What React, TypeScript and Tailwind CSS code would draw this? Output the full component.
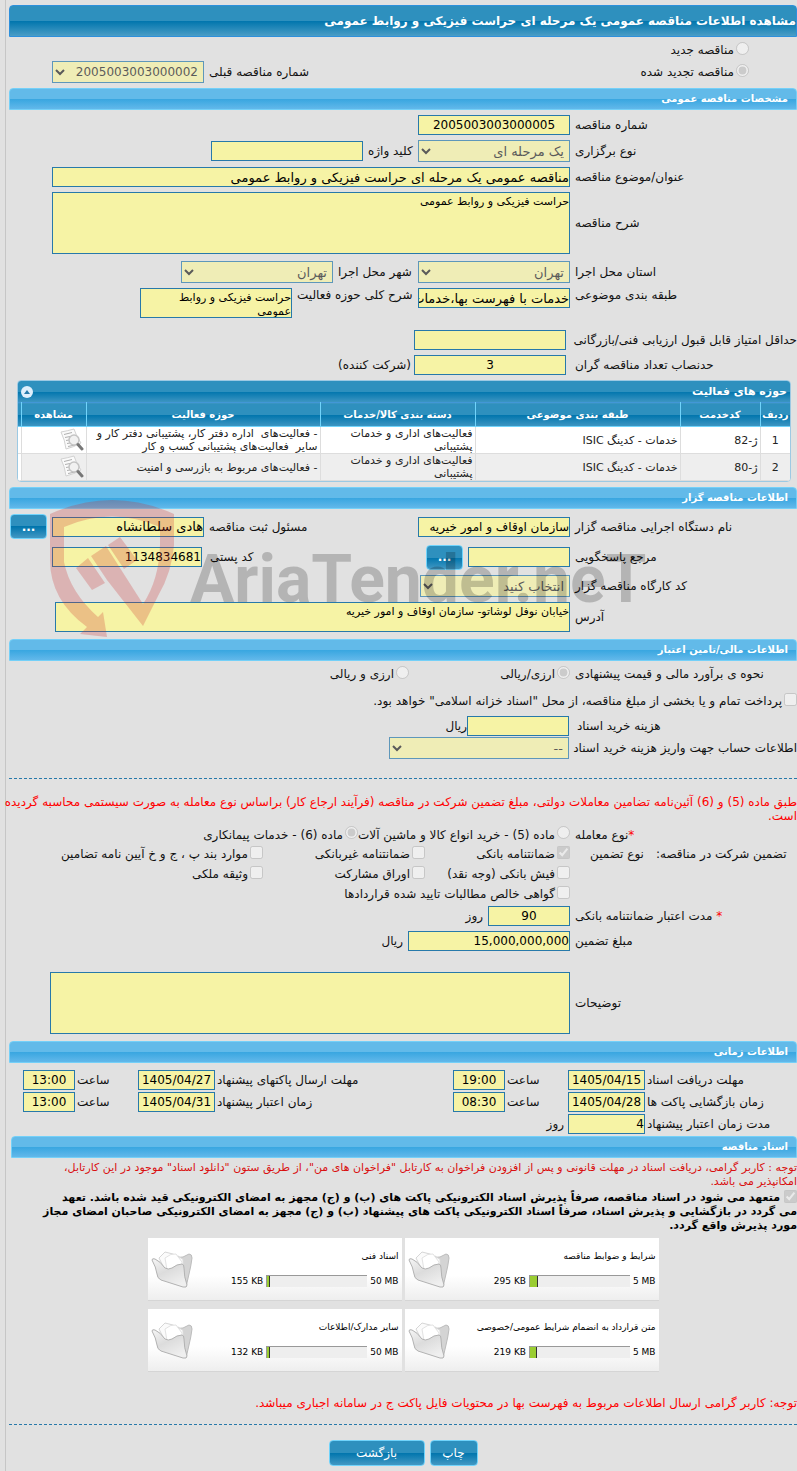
import React from 'react';
import clsx from 'clsx';

const box =
  'border border-[#2779aa] bg-[#f6f3a5] text-black rounded-none outline-none resize-none p-0 leading-[14px]';
const btn =
  'rounded-[4px] border border-[#70d3fb] bg-[linear-gradient(#2e90be_0%,#2e90be_50%,#0075ad_50%,#4298c3_100%)] text-white text-[12px] flex items-center justify-center shrink-0';

interface TextBoxProps {
  id: string;
  value?: string;
  className?: string;
  size?: string;
}

const TextBox: React.FC<TextBoxProps> = ({ id, value = '', className, size = 'text-[12px]' }) => (
  <input id={id} type="text" readOnly defaultValue={value} className={clsx(box, size, 'h-5 shrink-0', className)} />
);

const Area: React.FC<TextBoxProps> = ({ id, value = '', className }) => (
  <textarea id={id} readOnly defaultValue={value} className={clsx(box, 'block overflow-hidden text-[11px] pt-[2px]', className)} />
);

const Select: React.FC<TextBoxProps> = ({ id, value = '', className, size = 'text-[13px]' }) => (
  <select
    id={id}
    disabled
    className={clsx('h-[22px] shrink-0 border border-[#2779aa] bg-[#f6f3a5] text-[#222] opacity-70 ps-px pe-1', size, className)}
  >
    <option>{value}</option>
  </select>
);

// label column, text sits next to the field on its left
const Label: React.FC<{ htmlFor?: string; className?: string; children: React.ReactNode }> = ({ htmlFor, className, children }) => (
  <label htmlFor={htmlFor} className={clsx('shrink-0 text-left whitespace-nowrap', className || 'w-[222px]')}>
    {children}
  </label>
);

interface ChoiceProps {
  type: 'radio' | 'checkbox';
  name: string;
  checked?: boolean;
  className?: string;
  children: React.ReactNode;
}

const Choice: React.FC<ChoiceProps> = ({ type, name, checked, className, children }) => (
  <label className={clsx('flex items-center gap-[2px] whitespace-nowrap shrink-0', className)}>
    <input type={type} name={name} defaultChecked={checked} disabled className="w-[13px] h-[13px] shrink-0 mb-1" />
    {children}
  </label>
);

const SectionBar: React.FC<{ children: React.ReactNode; className?: string }> = ({ children, className }) => (
  <h2
    className={clsx(
      'h-[22px] border border-[#74d0f8] rounded-t-[4px] bg-[linear-gradient(#62bae9_0%,#62bae9_50%,#38a6e0_50%,#62b8ea_100%)] text-white text-[10px] font-bold leading-5 px-2',
      className
    )}
  >
    {children}
  </h2>
);

const Row: React.FC<{ children: React.ReactNode; className?: string }> = ({ children, className }) => (
  <div className={clsx('flex items-center gap-[5px]', className)}>{children}</div>
);

const ViewIcon = () => (
  <svg width="24" height="24" viewBox="0 0 24 24" fill="none">
    <path d="M1 4 Q7 3 14 1 Q16 8 21 15 Q14 19 6 21 Q5 12 1 4 Z" fill="#fafafa" stroke="#d2d2d2" />
    <path d="M4 6.500 L12 4.500 M5 9.500 L10 8.500 M6 12.500 L9 12 M7 15.500 L10 15 M8 18.500 L15 17" stroke="#b0b0b0" />
    <circle cx="14" cy="12" r="5" fill="#efefef" fillOpacity=".85" stroke="#c4c4c4" strokeWidth="1.500" />
    <path d="M18 16.500 L22 21" stroke="#777777" strokeWidth="3" strokeLinecap="round" />
  </svg>
);

const FolderIcon = () => (
  <svg width="42" height="40" viewBox="0 0 42 40" fill="none">
    <defs>
      <linearGradient id="front" x1="0" y1="0" x2="0.6" y2="1">
        <stop offset="0" stopColor="#f6f6f6" />
        <stop offset="0.5" stopColor="#dcdcdc" />
        <stop offset="1" stopColor="#efefef" />
      </linearGradient>
    </defs>
    <path d="M27 6 Q28 8 32 7 L38 4 Q41 4 41 8 Q40 16 38 24 L35 37 L24 20 Z" fill="#d4d4d4" stroke="#bcbcbc" />
    <path d="M8 8 L14 2 L22 4 L32 9 L33 22 L14 20 Z" fill="#fbfbfb" stroke="#d6d6d6" />
    <path d="M14 8 Q20 3 25 4 L31 12 L31 22 L16 20 Z" fill="#ffffff" stroke="#e2e2e2" />
    <path
      d="M1 10 Q1 8 4 9 Q9 11 14 18 Q17 20 21 18 Q26 14 31 14 Q33 14 33 18 Q33 27 36 35 Q36 38 32 37 L10 30 Q6 28 6 24 Q5 17 1 10 Z"
      fill="url(#front)"
      stroke="#b2b2b2"
    />
  </svg>
);

const Watermark = () => (
  <div dir="ltr" aria-hidden="true" className="absolute left-[41px] top-[13px] flex pointer-events-none">
    <svg width="126" height="138" viewBox="0 0 126 138" fill="#cd2d2d" fillOpacity=".25">
      <path d="M0 14 Q62 -14 124 14 L124 45 Q122 72 108 96 L93 126 L57 80 L41 56 L56 46 L93 104 Q109 80 110 45 L110 27 Q62 6 14 27 L14 62 Q20 92 48 117 L53 112 L57 137 L30 134 L37 127 Q0 100 0 60 Z" />
      <path d="M26 68 L38 58 L55 83 L42 90 Z M58 45 L70 37 L87 60 L74 69 Z" />
    </svg>
    <span className="ml-[14px] mt-[48px] whitespace-nowrap font-[Roboto,sans-serif] text-[66px] leading-[64px] font-bold text-black/20">
      AriaTender.neT
    </span>
  </div>
);

const activities = [
  { code: 'ژ-82', text: '- فعالیت‌های  اداره دفتر کار، پشتیبانی دفتر کار و سایر  فعالیت‌های پشتیبانی کسب و کار' },
  { code: 'ژ-80', text: '- فعالیت‌های مربوط به بازرسی و امنیت' },
];

const ActivityPanel = () => (
  <div className="ms-[6px] me-2 border border-[#9cc9e3] rounded-[4px] overflow-hidden bg-white">
    <div className="h-[21px] flex items-center justify-between px-[3px] bg-[linear-gradient(#2e90be_0%,#2e90be_50%,#0075ad_50%,#3c95c2_100%)] text-white text-[11px] font-bold">
      <span>حوزه های فعالیت</span>
      <button type="button" aria-label="بستن" className="w-3 h-3 rounded-full bg-[#dfeffc] flex items-center justify-center">
        <svg width="6" height="4" viewBox="0 0 6 4">
          <path d="M0 4 L3 0 L6 4 Z" fill="#2779aa" />
        </svg>
      </button>
    </div>
    <table className="w-full table-fixed border-collapse text-[11px] leading-[13px] text-[#222]">
      <thead>
        <tr className="h-6 border-y border-t-[#4297d7] border-b-[#70d3fb] bg-[linear-gradient(#2e90be_0%,#2e90be_50%,#0075ad_50%,#3c95c2_100%)] text-white text-[10px]">
          <th className="w-[30px] font-bold">ردیف</th>
          <th className="w-20 font-bold border-x border-[#70d3fb]">کدخدمت</th>
          <th className="w-[205px] font-bold">طبقه بندی موضوعی</th>
          <th className="w-[155px] font-bold border-x border-[#70d3fb]">دسته بندی کالا/خدمات</th>
          <th className="font-bold">حوزه فعالیت</th>
          <th className="w-[65px] font-bold border-x border-[#70d3fb]">مشاهده</th>
          <th className="w-[3px]"></th>
        </tr>
      </thead>
      <tbody>
        {activities.map((item, index) => (
          <tr key={item.code} className={clsx('h-[27px] border-b border-[#dddddd]', index % 2 === 1 ? 'bg-[#eeeeee]' : 'bg-white')}>
            <td className="text-center">{index + 1}</td>
            <td className="px-[2px] border-x border-[#dddddd]">{item.code}</td>
            <td className="px-[2px]">خدمات - کدینگ ISIC</td>
            <td className="px-[2px] border-x border-[#dddddd]">
              <div className="w-[135px]">فعالیت‌های اداری و خدمات پشتیبانی</div>
            </td>
            <td className="px-[2px] whitespace-pre-wrap">{item.text}</td>
            <td className="border-x border-[#dddddd]">
              <a href="#view" aria-label="مشاهده" className="flex ps-[2px]">
                <ViewIcon />
              </a>
            </td>
            <td className="bg-white"></td>
          </tr>
        ))}
      </tbody>
    </table>
  </div>
);

const files = [
  { title: 'شرایط و ضوابط مناقصه', used: '295 KB', max: '5 MB', width: 8 },
  { title: 'اسناد فنی', used: '155 KB', max: '50 MB', width: 3 },
  { title: 'متن قرارداد به انضمام شرایط عمومی/خصوصی', used: '219 KB', max: '5 MB', width: 7 },
  { title: 'سایر مدارک/اطلاعات', used: '132 KB', max: '50 MB', width: 3 },
];

const FileCards = () => (
  <div className="grid grid-cols-[254px_254px] justify-center gap-x-[3px] gap-y-2 mt-[5px]">
    {files.map((f) => (
      <div key={f.title} className="relative h-[63px] border-b border-[#d5d5d5] bg-linear-to-b from-white from-60% to-[#eeeeee] px-[3px] pt-[10px] text-[9px] text-black">
        <div className="leading-4 whitespace-nowrap">{f.title}</div>
        <div className="flex items-center gap-[3px] mt-[9px] h-4">
          <span dir="ltr">{f.max}</span>
          <div dir="ltr" className="w-[101px] h-3 border-t border-l border-[#999] bg-[#eee]">
            <div className="h-full bg-[#9acd32] border-r border-[#333]" style={{ width: f.width }}></div>
          </div>
          <span dir="ltr">{f.used}</span>
        </div>
        <div className="absolute left-[3px] top-[12px]">
          <FolderIcon />
        </div>
      </div>
    ))}
  </div>
);

const Hour: React.FC<{ id: string; value: string }> = ({ id, value }) => (
  <>
    <Label htmlFor={id} className="w-[59px]">ساعت</Label>
    <TextBox id={id} value={value} className="w-[52px] text-center" />
  </>
);

const guarantees = [
  ['ضمانتنامه بانکی', 'ضمانتنامه غیربانکی', 'موارد بند پ ، ج و خ آیین نامه تضامین'],
  ['فیش بانکی (وجه نقد)', 'اوراق مشارکت', 'وثیقه ملکی'],
  ['گواهی خالص مطالبات تایید شده قراردادها'],
];

export default function App() {
  return (
    <div dir="rtl" className="min-h-screen overflow-hidden bg-[#e1e1e1] pl-[5px] font-['DejaVu_Sans',sans-serif] text-[12px] leading-[14px] text-[#111]">
      <main className="border-l border-[#c6c6c6] pl-[3px] py-[5px]">
        <h1 className="h-8 border border-[#2d90dc] rounded-t-[4px] bg-[linear-gradient(#2e90be_0%,#2e90be_50%,#0075ad_50%,#4a9dc6_100%)] text-white text-[12px] font-bold leading-[30px]">
          مشاهده اطلاعات مناقصه عمومی یک مرحله ای حراست فیزیکی و روابط عمومی
        </h1>

        <div className="ps-12 pt-[3px] pb-1">
          <Choice type="radio" name="kind" className="h-5">مناقصه جدید</Choice>
          <div className="flex items-center h-6 gap-[5px]">
            <Choice type="radio" name="kind" checked className="w-[331px]">مناقصه تجدید شده</Choice>
            <Label htmlFor="prev" className="flex-1 max-w-[204px]">شماره مناقصه قبلی</Label>
            <Select id="prev" value="2005003003000002" size="text-[12px]" className="w-[152px]" />
          </div>
        </div>

        <SectionBar>مشخصات مناقصه عمومی</SectionBar>
        <div className="flex flex-col gap-[5px] py-[5px]">
          <Row>
            <Label htmlFor="number">شماره مناقصه</Label>
            <TextBox id="number" value="2005003003000005" className="w-[152px] text-center" />
          </Row>
          <Row>
            <Label htmlFor="type">نوع برگزاری</Label>
            <Select id="type" value="یک مرحله ای" className="w-[152px]" />
            <Label htmlFor="keyword" className="w-[45px]">کلید واژه</Label>
            <TextBox id="keyword" className="w-[152px]" />
          </Row>
          <Row className="pl-[43px]">
            <Label htmlFor="subject">عنوان/موضوع مناقصه</Label>
            <TextBox id="subject" value="مناقصه عمومی یک مرحله ای حراست فیزیکی و روابط عمومی" size="text-[13px]" className="flex-1" />
          </Row>
          <Row className="pl-[43px]">
            <Label htmlFor="desc">شرح مناقصه</Label>
            <Area id="desc" value="حراست فیزیکی و روابط عمومی" className="flex-1 h-[62px]" />
          </Row>
          <Row className="pt-[2px]">
            <Label htmlFor="province">استان محل اجرا</Label>
            <Select id="province" value="تهران" className="w-[152px]" />
            <Label htmlFor="city" className="w-[75px]">شهر محل اجرا</Label>
            <Select id="city" value="تهران" className="w-[152px]" />
          </Row>
          <div className="flex items-start gap-[5px]">
            <Label htmlFor="category">طبقه بندی موضوعی</Label>
            <TextBox id="category" value="خدمات با فهرست بها،خدمات بدون فهرست بها" size="text-[13px]" className="w-[152px]" />
            <Label htmlFor="scope" className="w-[116px]">شرح کلی حوزه فعالیت</Label>
            <Area id="scope" value="حراست فیزیکی و روابط عمومی" className="w-[152px] h-[30px] pl-6" />
          </div>
          <div className="flex items-center gap-[9px] pt-[7px]">
            <Label htmlFor="minScore">حداقل امتیاز قابل قبول ارزیابی فنی/بازرگانی</Label>
            <TextBox id="minScore" className="w-[152px]" />
          </div>
          <div className="flex items-center gap-[9px]">
            <Label htmlFor="minCount">حدنصاب تعداد مناقصه گران</Label>
            <TextBox id="minCount" value="3" className="w-[152px] text-center" />
            <span className="-ms-[6px]">(شرکت کننده)</span>
          </div>
        </div>

        <ActivityPanel />

        <div className="relative mt-[5px]">
          <SectionBar>اطلاعات مناقصه گزار</SectionBar>
          <Row className="h-[35px]">
            <Label htmlFor="org">نام دستگاه اجرایی مناقصه گزار</Label>
            <TextBox id="org" value="سازمان اوقاف و امور خیریه" className="w-[152px]" />
            <Label htmlFor="officer" className="w-[204px]">مسئول ثبت مناقصه</Label>
            <TextBox id="officer" value="هادی سلطانشاه" size="text-[13px]" className="w-[152px]" />
            <button type="button" className={clsx(btn, 'w-[37px] h-[25px] font-bold')}>...</button>
          </Row>
          <Row className="h-[26px]">
            <Label htmlFor="contact">مرجع پاسخگویی</Label>
            <TextBox id="contact" className="w-[102px]" />
            <button type="button" className={clsx(btn, 'w-[37px] h-[25px] font-bold')}>...</button>
            <Label htmlFor="postal" className="w-[211px]">کد پستی</Label>
            <TextBox id="postal" value="1134834681" className="w-[150px] ms-[3px]" />
          </Row>
          <Row className="h-8">
            <Label htmlFor="workshop">کد کارگاه مناقصه گزار</Label>
            <Select id="workshop" value="انتخاب کنید" className="w-[150px]" />
          </Row>
          <Row className="pl-[46px] pb-[7px]">
            <Label htmlFor="address">آدرس</Label>
            <Area id="address" value="خیابان نوفل لوشاتو- سازمان اوقاف و امور خیریه" className="flex-1 h-[30px]" />
          </Row>
          <Watermark />
        </div>

        <SectionBar>اطلاعات مالی/تامین اعتبار</SectionBar>
        <Row className="h-[26px]">
          <span className="w-[222px] text-left shrink-0">نحوه ی برآورد مالی و قیمت پیشنهادی</span>
          <Choice type="radio" name="currency" checked className="w-[156px]">ارزی/ریالی</Choice>
          <Choice type="radio" name="currency">ارزی و ریالی</Choice>
        </Row>
        <Choice type="checkbox" name="treasury" className="h-7">
          پرداخت تمام و یا بخشی از مبلغ مناقصه، از محل "اسناد خزانه اسلامی" خواهد بود.
        </Choice>
        <div className="flex items-center gap-2 h-[21px]">
          <Label htmlFor="docFee" className="w-[220px]">هزینه خرید اسناد</Label>
          <TextBox id="docFee" className="w-[102px]" />
          <span className="-ms-2">ریال</span>
        </div>
        <div className="flex items-center gap-2 mt-px">
          <Label htmlFor="account" className="w-[220px]">اطلاعات حساب جهت واریز هزینه خرید اسناد</Label>
          <Select id="account" value="--" className="w-[180px]" />
        </div>
        <hr className="mt-[19px] border-t border-dashed border-[#2779aa]" />

        <p className="mt-4 whitespace-nowrap text-[#ff0000]">
          طبق ماده (5) و (6) آئین‌نامه تضامین معاملات دولتی، مبلغ تضمین شرکت در مناقصه (فرآیند ارجاع کار) براساس نوع معامله به صورت سیستمی محاسبه گردیده
          <br />
          است.
        </p>
        <Row className="h-[19px] mt-[2px]">
          <span className="w-[222px] text-left shrink-0"><span className="text-[#ff0000]">*</span>نوع معامله</span>
          <Choice type="radio" name="deal" className="w-[207px]">ماده (5) - خرید انواع کالا و ماشین آلات</Choice>
          <Choice type="radio" name="deal" checked>ماده (6) - خدمات پیمانکاری</Choice>
        </Row>
        {guarantees.map((list, row) => (
          <Row key={row} className="h-5">
            <div className="w-[222px] shrink-0 flex justify-end gap-3 pl-[15px] whitespace-nowrap">
              {row === 0 && (
                <>
                  <span>تضمین شرکت در مناقصه:</span>
                  <span>نوع تضمین</span>
                </>
              )}
            </div>
            {list.map((text, col) => (
              <Choice key={text} type="checkbox" name="guarantee" checked={row === 0 && col === 0} className={col === 0 ? 'w-[140px]' : 'w-[157px]'}>
                {text}
              </Choice>
            ))}
          </Row>
        ))}
        <div className="flex flex-col gap-[5px] pt-[2px] pb-[7px]">
          <Row>
            <Label htmlFor="validity"><span className="text-[#ff0000]">*</span> مدت اعتبار ضمانتنامه بانکی</Label>
            <TextBox id="validity" value="90" className="w-[82px] text-center" />
            <span>روز</span>
          </Row>
          <Row>
            <Label htmlFor="amount">مبلغ تضمین</Label>
            <TextBox id="amount" value="15,000,000,000" className="w-[162px]" />
            <span>ریال</span>
          </Row>
          <Row className="pl-[41px] pt-4">
            <Label htmlFor="notes">توضیحات</Label>
            <Area id="notes" className="flex-1 h-[62px]" />
          </Row>
        </div>

        <SectionBar>اطلاعات زمانی</SectionBar>
        <div className="flex flex-col gap-[2px] pt-[7px] pb-[2px]">
          <div className="flex items-center gap-[2px]">
            <Label htmlFor="d1" className="w-[150px]">مهلت دریافت اسناد</Label>
            <TextBox id="d1" value="1405/04/15" className="w-[77px] text-center" />
            <Hour id="h1" value="19:00" />
            <Label htmlFor="d2" className="w-[234px]">مهلت ارسال پاکتهای پیشنهاد</Label>
            <TextBox id="d2" value="1405/04/27" className="w-[77px] text-center" />
            <Hour id="h2" value="13:00" />
          </div>
          <div className="flex items-center gap-[2px]">
            <Label htmlFor="d3" className="w-[150px]">زمان بازگشایی پاکت ها</Label>
            <TextBox id="d3" value="1405/04/28" className="w-[77px] text-center" />
            <Hour id="h3" value="08:30" />
            <Label htmlFor="d4" className="w-[234px]">زمان اعتبار پیشنهاد</Label>
            <TextBox id="d4" value="1405/04/31" className="w-[77px] text-center" />
            <Hour id="h4" value="13:00" />
          </div>
          <div className="flex items-center gap-[2px]">
            <Label htmlFor="duration" className="w-[150px]">مدت زمان اعتبار پیشنهاد</Label>
            <TextBox id="duration" value="4" className="w-[77px]" />
            <span className="ps-[2px]">روز</span>
          </div>
        </div>

        <SectionBar className="ml-[2px]">اسناد مناقصه</SectionBar>
        <p className="mt-[3px] text-[11px] text-[#d90f0f]">
          توجه : کاربر گرامی، دریافت اسناد در مهلت قانونی و پس از افزودن فراخوان به کارتابل "فراخوان های من"، از طریق ستون "دانلود اسناد" موجود در این کارتابل،
          <br />
          امکانپذیر می باشد.
        </p>
        <label className="block mt-[2px] text-[11px] font-bold text-black">
          <input type="checkbox" defaultChecked disabled className="w-[13px] h-[13px] ml-1 -mt-1 align-middle" />
          متعهد می شود در اسناد مناقصه، صرفاً پذیرش اسناد الکترونیکی پاکت های (ب) و (ج) مجهز به امضای الکترونیکی قید شده باشد. تعهد
          <br />
          می گردد در بازگشایی و پذیرش اسناد، صرفاً اسناد الکترونیکی پاکت های پیشنهاد (ب) و (ج) مجهز به امضای الکترونیکی صاحبان امضای مجاز
          <br />
          مورد پذیرش واقع گردد.
        </label>

        <FileCards />

        <p className="mt-6 text-[#ff0000]">
          توجه: کاربر گرامی ارسال اطلاعات مربوط به فهرست بها در محتویات فایل پاکت ج در سامانه اجباری میباشد.
        </p>
        <hr className="mt-[14px] border-t border-dashed border-[#2779aa]" />

        <div className="flex justify-center gap-[5px] mt-[15px]">
          <button type="button" className={clsx(btn, 'w-12 h-[26px]')}>چاپ</button>
          <button type="button" className={clsx(btn, 'w-24 h-[26px]')}>بازگشت</button>
        </div>
      </main>
    </div>
  );
}
